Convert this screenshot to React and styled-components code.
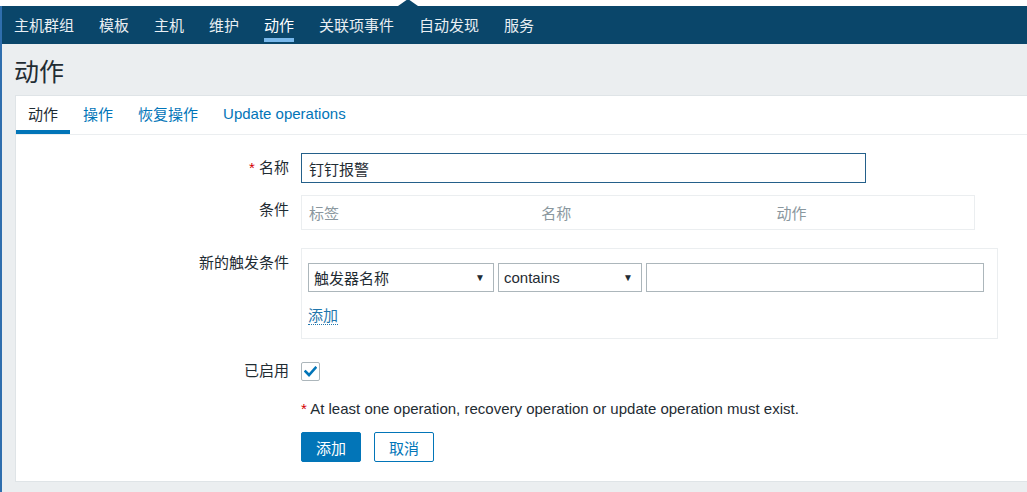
import React from "react";
import styled, { createGlobalStyle } from "styled-components";

const GlobalStyle = createGlobalStyle`
  html, body {
    margin: 0;
    padding: 0;
    background: #ebeef0;
  }
  body {
    font-family: "Liberation Sans", Arial, "Noto Sans CJK SC", sans-serif;
    font-size: 15px;
    color: #1f2c33;
  }
  * { box-sizing: border-box; }
`;

const navItems = ["主机群组", "模板", "主机", "维护", "动作", "关联项事件", "自动发现", "服务"];
const tabs = ["动作", "操作", "恢复操作", "Update operations"];

const App = () => {
  return (
    <Page>
      <GlobalStyle />
      <TopStrip>
        <Caret />
      </TopStrip>
      <Body>
        <Nav>
          {navItems.map((item) => (
            <NavItem key={item} $active={item === "动作"}>{item}</NavItem>
          ))}
        </Nav>
        <Header>
          <Title>动作</Title>
        </Header>
        <Panel>
          <TabBar>
            {tabs.map((t, i) => (
              <Tab key={t} $active={i === 0}>{t}</Tab>
            ))}
          </TabBar>
          <Form>
            <Row $mt={0}>
              <Label><Asterisk>*</Asterisk> 名称</Label>
              <NameInput defaultValue="钉钉报警" />
            </Row>
            <Row $mt={12}>
              <Label>条件</Label>
              <CondTable>
                <CondCell $w={233}>标签</CondCell>
                <CondCell $w={236}>名称</CondCell>
                <CondCell $w={205}>动作</CondCell>
              </CondTable>
            </Row>
            <Row $mt={18}>
              <Label>新的触发条件</Label>
              <TriggerBox>
                <Selects>
                  <Select $w={186}>
                    <span>触发器名称</span>
                    <Arrow>▼</Arrow>
                  </Select>
                  <Select $w={144}>
                    <span>contains</span>
                    <Arrow>▼</Arrow>
                  </Select>
                  <ValueInput />
                </Selects>
                <AddLink>添加</AddLink>
              </TriggerBox>
            </Row>
            <Row $mt={17}>
              <Label>已启用</Label>
              <CheckCell>
                <Checkbox>
                  <svg width="13" height="11" viewBox="0 0 13 11">
                    <path d="M1.5 5.5 L5 9 L11.5 1.8" fill="none" stroke="#0275b8" strokeWidth="2.6" strokeLinecap="square" />
                  </svg>
                </Checkbox>
              </CheckCell>
            </Row>
            <Note>
              <Asterisk>*</Asterisk> At least one operation, recovery operation or update operation must exist.
            </Note>
            <Buttons>
              <Button $primary>添加</Button>
              <Button>取消</Button>
            </Buttons>
          </Form>
        </Panel>
      </Body>
    </Page>
  );
};

export default App;

const Page = styled.div`
  width: 1027px;
  height: 492px;
  overflow: hidden;
  background: #ebeef0;
`;

const TopStrip = styled.div`
  height: 6px;
  background: #ffffff;
  position: relative;
`;

const Caret = styled.div`
  position: absolute;
  left: 398px;
  top: -1px;
  width: 0;
  height: 0;
  border-left: 10px solid transparent;
  border-right: 10px solid transparent;
  border-bottom: 7px solid #0a466a;
`;

const Body = styled.div`
  border-left: 2px solid #2f6eae;
  height: 486px;
`;

const Nav = styled.nav`
  height: 38px;
  background: #0a466a;
  display: flex;
  align-items: stretch;
  gap: 25px;
  padding-left: 12px;
  font-family: "Noto Sans CJK SC", sans-serif;
`;

const NavItem = styled.div`
  position: relative;
  display: flex;
  align-items: center;
  font-size: 15px;
  line-height: 17px;
  padding-bottom: 1px;
  color: ${(p) => (p.$active ? "#ffffff" : "#e9eff3")};

  &::after {
    content: "";
    display: ${(p) => (p.$active ? "block" : "none")};
    position: absolute;
    left: 0;
    right: 0;
    bottom: 2px;
    height: 4px;
    background: #79b8eb;
  }
`;

const Header = styled.div`
  height: 51px;
  display: flex;
  align-items: center;
  padding-left: 12px;
`;

const Title = styled.h1`
  margin: 0;
  font-family: "Noto Sans CJK SC", sans-serif;
  font-weight: normal;
  font-size: 25px;
  line-height: 28px;
  color: #1f2c33;
`;

const Panel = styled.div`
  margin-left: 13px;
  background: #ffffff;
  border-top: 1px solid #dfe4e7;
  border-left: 1px solid #dfe4e7;
  border-bottom: 1px solid #dfe4e7;
  padding-bottom: 19px;
`;

const TabBar = styled.div`
  height: 39px;
  display: flex;
  border-bottom: 1px solid #ebeef0;
`;

const Tab = styled.div`
  display: flex;
  align-items: center;
  padding: 1px 12px 0 12px;
  margin-right: 1px;
  font-size: 15px;
  color: ${(p) => (p.$active ? "#1f2c33" : "#0275b8")};
  border-bottom: 4px solid ${(p) => (p.$active ? "#0275b8" : "transparent")};
`;

const Form = styled.div`
  padding-top: 18px;
`;

const Row = styled.div`
  display: grid;
  grid-template-columns: 273px 1fr;
  column-gap: 12px;
  align-items: start;
  margin-top: ${(p) => p.$mt}px;
`;

const Label = styled.div`
  text-align: right;
  line-height: 30px;
  height: 30px;
  font-size: 15px;
  color: #1f2c33;
`;

const Asterisk = styled.span`
  color: #d40000;
`;

const NameInput = styled.input`
  width: 565px;
  height: 30px;
  border: 1px solid #24608a;
  padding: 0 7px;
  font-family: inherit;
  font-size: 15px;
  color: #1f2c33;
  outline: none;
  border-radius: 0;
`;

const CondTable = styled.div`
  width: 674px;
  height: 35px;
  border: 1px solid #ebeef0;
  display: flex;
  align-items: center;
`;

const CondCell = styled.div`
  width: ${(p) => p.$w}px;
  padding-left: 7px;
  font-size: 15px;
  color: #8a979e;
`;

const TriggerBox = styled.div`
  width: 697px;
  height: 91px;
  border: 1px solid #ebeef0;
  padding: 14px 13px 0 6px;
`;

const Selects = styled.div`
  display: flex;
  gap: 4px;
`;

const Select = styled.div`
  width: ${(p) => p.$w}px;
  height: 29px;
  border: 1px solid #acb6bb;
  display: flex;
  align-items: center;
  justify-content: space-between;
  padding: 0 8px 0 5px;
  font-size: 15px;
  color: #1f2c33;
`;

const Arrow = styled.span`
  font-size: 10px;
  color: #1f2c33;
`;

const ValueInput = styled.input`
  width: 338px;
  height: 29px;
  border: 1px solid #acb6bb;
  outline: none;
  border-radius: 0;
`;

const AddLink = styled.span`
  display: inline-block;
  margin-top: 15px;
  font-size: 15px;
  line-height: 17px;
  color: #1f76ad;
  border-bottom: 1px dotted #1f76ad;
`;

const CheckCell = styled.div`
  height: 30px;
  display: flex;
  align-items: center;
`;

const Checkbox = styled.div`
  width: 19px;
  height: 19px;
  border: 1px solid #acb6bb;
  border-radius: 2px;
  display: flex;
  align-items: center;
  justify-content: center;
`;

const Note = styled.div`
  margin: 14px 0 0 285px;
  line-height: 18px;
  font-size: 15px;
  color: #1f2c33;
`;

const Buttons = styled.div`
  display: flex;
  gap: 13px;
  margin: 14px 0 0 285px;
`;

const Button = styled.button`
  width: 60px;
  height: 30px;
  border: 1px solid #0275b8;
  border-radius: 2px;
  background: ${(p) => (p.$primary ? "#0275b8" : "#ffffff")};
  color: ${(p) => (p.$primary ? "#ffffff" : "#0275b8")};
  font-family: inherit;
  font-size: 15px;
  padding: 0;
  cursor: pointer;
`;
